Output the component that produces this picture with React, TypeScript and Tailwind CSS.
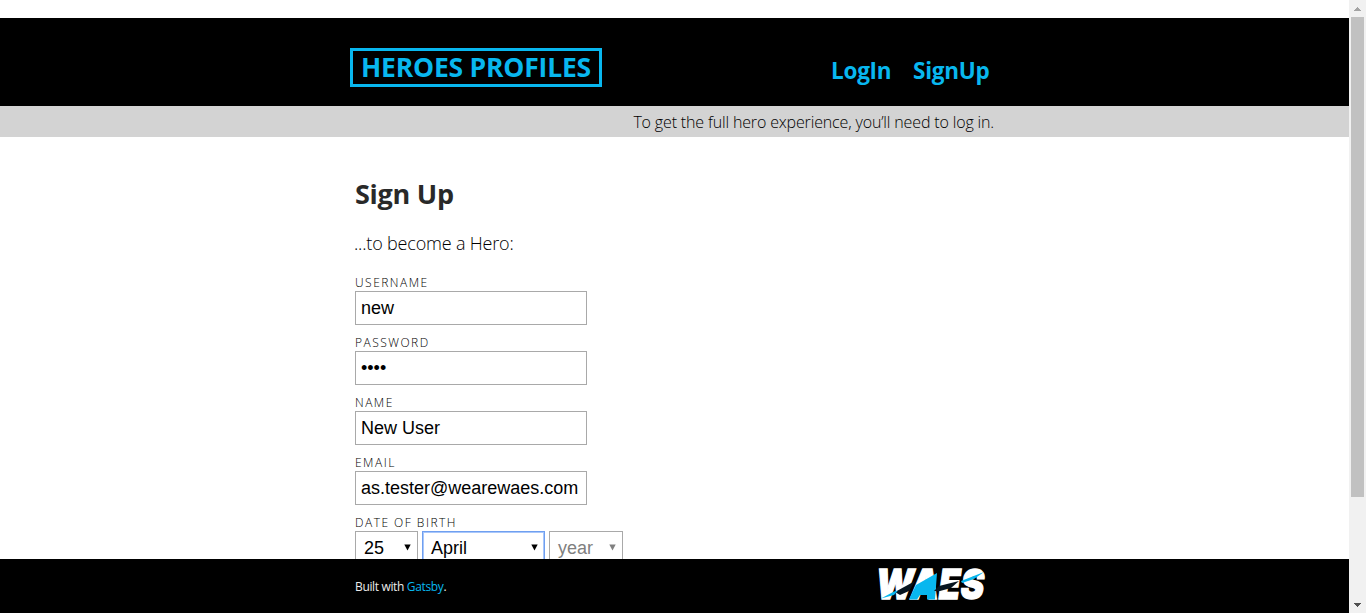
import React from "react";

const fieldClass =
  "block h-[34px] w-[232px] border border-[#a9a9a9] bg-white pl-[5px] pr-1 font-['Liberation_Sans',sans-serif] text-[18px] text-black outline-none";

function Field({ label, value, type = "text" }: { label: string; value: string; type?: string }) {
  return (
    <label className="mb-2 block h-[52px]">
      <Caption>{label}</Caption>
      <input className={fieldClass} type={type} defaultValue={value} />
    </label>
  );
}

function Caption({ children }: { children: React.ReactNode }) {
  return (
    <span className="block h-[18px] whitespace-nowrap text-[12px] leading-[20px] font-light tracking-[1.48px] text-black uppercase">
      {children}
    </span>
  );
}

function Picker({ value, className }: { value: string; className: string }) {
  return (
    <button
      type="button"
      className={`flex h-[34px] items-center justify-between border bg-white pl-2 pr-[6px] font-['Liberation_Sans',sans-serif] text-[18px] ${className}`}
    >
      <span>{value}</span>
      <svg width="7" height="7" viewBox="0 0 7 7" className="mb-[2px]" fill="currentColor">
        <path d="M0.300 0.500H6.700L3.500 6.500Z" />
      </svg>
    </button>
  );
}

function WaesLogo() {
  return (
    <svg width="118" height="54" viewBox="-2 -9 118 54" className="block overflow-visible">
      <text x="-1" y="33" textLength="108" lengthAdjust="spacingAndGlyphs" fontFamily="Inter, sans-serif" fontWeight="900" fontStyle="italic" fontSize="41" fill="#fff" stroke="#fff" strokeWidth="1.3">
        WAES
      </text>
      <path d="M18 26L38 15L32 25L23 29Z" fill="#07141f" />
      <path d="M32 33.500L39 19L60 7L58 33.500H50L50 29H43L40 33.500Z" fill="#08b7ef" />
      <path d="M57 25L62 20L82 15L74 22L63 25Z" fill="#07141f" />
      <path d="M4 32.500L17 25.500L21 24.500L17 29Z" fill="#08b7ef" />
      <path d="M84 15L107 6L97 13L85 17Z" fill="#08b7ef" />
    </svg>
  );
}

function Scrollbar() {
  return (
    <div className="flex w-[17px] shrink-0 flex-col items-center bg-[#f1f1f1]">
      <div className="flex h-[17px] items-center">
        <svg width="7" height="4" viewBox="0 0 7 4" fill="#a3a3a3" shapeRendering="crispEdges">
          <path d="M3 0h1v1h1v1h1v1h1v1H0V3h1V2h1V1h1z" />
        </svg>
      </div>
      <div className="h-[480px] w-[13px] bg-[#c1c1c1]" />
      <div className="mt-auto flex h-[17px] items-center">
        <svg width="7" height="4" viewBox="0 0 7 4" fill="#505050" shapeRendering="crispEdges">
          <path d="M0 0h7v1H6v1H5v1H4v1H3V3H2V2H1V1H0z" />
        </svg>
      </div>
    </div>
  );
}

export default function App() {
  return (
    <div className="flex h-[613px] w-[1366px] overflow-hidden bg-white font-['Open_Sans','Noto_Sans',sans-serif] text-[#292929]">
      <div className="flex w-[1349px] flex-col">
        <header className="mt-[18px] h-[88px] shrink-0 bg-black text-[#08b7ef]">
          <div className="mx-auto flex w-[639px] justify-between">
            <a className="mt-[30px] -ml-[5px] block h-[39px] w-[252px] border-3 border-[#08b7ef] pl-2 text-[26.5px] leading-[33px] font-bold whitespace-nowrap">
              <span className="tracking-[-0.2px]">HEROES PROFILES</span>
            </a>
            <nav className="mt-[37px] mr-1 flex h-8 text-[22.5px] leading-[31px] font-bold tracking-[-0.25px]">
              <a className="w-[82px]">LogIn</a>
              <a className="w-[77px]">SignUp</a>
            </nav>
          </div>
        </header>
        <div className="h-[31px] shrink-0 bg-[#d3d3d3]">
          <p className="mx-auto flex w-[639px] justify-end text-[16px] leading-[33px] font-light whitespace-nowrap text-black">
            <span className="tracking-[-0.15px]">To get the full hero experience, you’ll need to log in.</span>
          </p>
        </div>
        <main className="h-[422px] shrink-0 overflow-hidden">
          <div className="mx-auto w-[639px]">
            <h1 className="mt-[37px] h-10 text-[27px] leading-10 font-bold tracking-[-0.25px]">Sign Up</h1>
            <p className="mt-[14px] -ml-px h-[30px] text-[18px] leading-[30px] font-light tracking-[-0.18px] text-black">...to become a Hero:</p>
            <form className="mt-[15px]">
              <Field label="Username" value="new" />
              <Field label="Password" value="pass" type="password" />
              <Field label="Name" value="New User" />
              <Field label="Email" value="as.tester@wearewaes.com" />
              <Caption>Date of birth</Caption>
              <div className="flex">
                <Picker value="25" className="w-[63px] border-[#a9a9a9] text-black" />
                <Picker value="April" className="ml-1 w-[123px] border-[#6f9ff0] text-black ring-1 ring-[#a9c7fa] ring-inset" />
                <Picker value="year" className="ml-1 w-[74px] border-[#a9a9a9] text-[#808080]" />
              </div>
            </form>
          </div>
        </main>
        <footer className="h-[54px] shrink-0 bg-black">
          <div className="mx-auto flex w-[639px] items-start justify-between text-[#ececec]">
            <p className="mt-[18px] text-[12px] leading-5 tracking-[-0.35px]">
              Built with <a className="text-[#08b7ef]">Gatsby</a>.
            </p>
            <div className="-mt-0.5 mr-px">
              <WaesLogo />
            </div>
          </div>
        </footer>
      </div>
      <Scrollbar />
    </div>
  );
}
